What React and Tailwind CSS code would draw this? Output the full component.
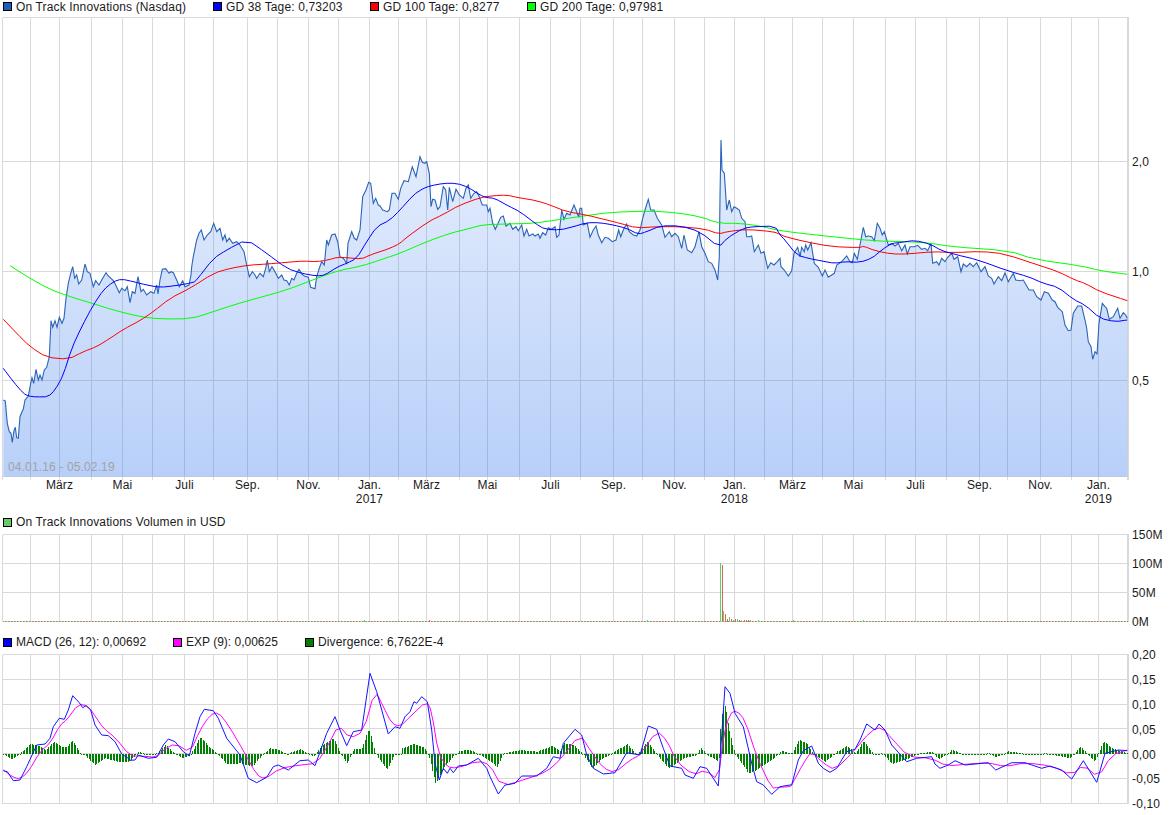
import React from 'react';

// traced from the chart, each piece is [offsetX, offsetY, "x,y x,y ..."] at 3x scale
const trace = (pieces) => {
  const out = [];
  pieces.forEach(([ox, oy, str]) => {
    str.trim().split(/\s+/).forEach((p) => {
      const [x, y] = p.split(',').map(Number);
      const rx = ox + x / 3;
      if (!out.length || rx > out[out.length - 1][0]) out.push([rx, oy + y / 3]);
    });
  });
  return out;
};

const toLine = (pts) => pts.map(([x, y]) => `${x.toFixed(1)},${y.toFixed(1)}`).join(' ');

// corner cutting, the averages are smooth curves and not polygons
const smooth = (pts, rounds = 2) => {
  let cur = pts;
  for (let r = 0; r < rounds; r++) {
    const next = [cur[0]];
    for (let i = 0; i < cur.length - 1; i++) {
      const [x0, y0] = cur[i];
      const [x1, y1] = cur[i + 1];
      next.push([x0 * 0.75 + x1 * 0.25, y0 * 0.75 + y1 * 0.25]);
      next.push([x0 * 0.25 + x1 * 0.75, y0 * 0.25 + y1 * 0.75]);
    }
    next.push(cur[cur.length - 1]);
    cur = next;
  }
  return cur;
};

const price = trace([
  [0, 260, '10,420 16,423 22,490 28,515 33,520 37,547 42,512 46,502 50,533 55,535 60,470 66,455 70,447 75,420 85,408 92,370 96,353 101,370 108,328 115,360 120,345 126,360 133,330 140,322 148,290 153,182 158,202 165,182 171,202 178,172 186,190 192,175 198,115 205,70 212,40 218,20 224,55 230,45 236,72 245,60 255,12 262,35 270,40 280,80 287,62 297,75 305,60 318,38 325,48 333,55 340,62 347,75 358,98 365,85 375,92 382,80 390,128 397,95 405,100 414,50 423,95 430,88 440,105 452,95 462,100 470,75 474,102 480,60 487,28 497,26 507,40 513,35 520,38 530,60 538,80 548,62 555,80 567,75 573,45'],
  [0, 0, '575,800 580,770 590,720 597,700 604,690 612,720 622,705 632,695 641,670 650,695 660,685 668,720 675,705 680,725 688,715 698,730 710,725 720,735 732,755 740,795 748,830 757,815 765,825 770,835 780,820 790,830 797,805 802,780 808,815 816,800 825,815 835,835 845,825 852,840'],
  [0, 260, '860,62 868,75 875,55 882,60 890,40 897,28 905,42 913,48 925,52 932,82 945,86 950,50 958,25 965,5'],
  [0, 0, '973,795 980,720 985,735 995,705 1005,702 1013,725 1020,770 1030,775 1040,790 1044,730 1055,695 1063,715 1070,720 1080,690 1088,590 1098,570 1106,547 1112,550 1120,610 1127,595 1135,615'],
  [380, 130, '0,228 8,240 22,245 28,240 36,190 45,190 55,208 62,175 72,152 85,155 97,110 108,140 120,80 127,97 134,100 140,95 148,130 153,230 158,208 165,210 173,238 180,230 190,170 197,180 203,240 208,172 218,215 228,178 238,195 250,205 258,175 265,165 272,205 282,190 290,185 298,200 307,225 320,225 325,245 330,235 338,280 346,298 352,285 362,262 370,258 378,288 390,280 398,298 408,290 415,302 425,285 432,318 440,298 447,318 458,312 465,318 475,312 480,325 488,308 497,315 505,293 515,298 525,290 530,322 537,315 545,240 552,268 560,250 570,255 582,225 590,245 596,262 600,235 605,235 610,285 622,280 630,322 640,300 648,288 655,315 665,338 675,322 685,325 697,335 708,330 716,300 722,320 732,295 740,282 748,305 760,315 770,318 780,300 788,265 795,240 805,208 812,240 822,240 832,265 845,285 855,322 868,305 875,320 885,310 895,320 905,355 912,315 922,360 935,368 945,350 957,305 965,350 975,370 985,395 995,400 1005,420 1013,450 1018,380 1020,200 1023,30 1026,120 1033,130 1040,240 1048,210 1055,245 1062,230 1070,235 1078,240 1085,265 1095,275 1100,320 1108,320 1115,318 1123,365 1135,345 1143,370 1152,365 1163,415 1172,398 1182,405 1192,395 1200,385'],
  [775, 130, '18,410 28,420 40,438 50,422 57,370 68,352 75,380 80,352 88,365 92,345 98,360 108,338 118,400 130,412 142,438 150,420 160,442 178,430 185,405 200,395 215,378 225,395 232,398 238,370 247,388 255,345 265,292 272,320 280,318 290,320 298,332 307,280 315,295 322,315 328,305 340,345 350,340 360,348 370,340 380,362 390,345 397,372 405,350 418,350 428,346 440,358 450,355 458,362 468,340 473,400 485,395 492,405 500,385 510,395 518,382 530,370 537,388 548,380 558,425 565,402 575,410 585,400 595,410 605,398 618,425 630,410 640,438 650,445 657,462 670,440 680,452 690,428 700,455 715,430 722,450 735,452 745,450 762,480 775,480 785,500 798,510 808,485 820,490 832,510 840,515 848,532 862,545 870,585 880,602 888,600 895,550 908,528 920,528 930,570 935,595 940,635 948,650 953,688 960,665 966,672 972,580 982,520 990,530 995,535 1003,568 1015,560 1028,535 1035,565 1045,548 1052,555 1057,565'],
]);

const gd38 = smooth(trace([
  [0, 260, '10,325 40,365 70,400 85,408 110,411 145,410 165,390 190,345 215,265 245,200 280,135 310,90 340,65 365,57 400,65 440,75 480,82 520,78 580,68'],
  [0, 0, '590,840 640,775 680,750 740,718 800,760 860,805 905,820 950,828 975,825 1010,802 1040,790 1070,775 1100,725 1130,680 1170,660 1200,630'],
  [380, 130, '100,195 130,175 150,168 190,160 230,160 265,172 300,195 320,203 345,205 385,228 420,245 465,280 495,298 540,300 580,290 620,278 660,278 700,285 740,295 775,313 800,305 840,288 900,287 960,305 1017,352 1040,325 1090,295 1120,290 1185,288 1200,315'],
  [775, 130, '30,330 65,375 100,385 140,393 180,400 210,395 255,397 290,385 320,360 350,340 380,337 420,331 465,342 500,362 540,373 610,390 700,423 760,440 805,460 850,472 895,508 930,525 975,565 1020,575 1057,570'],
]), 1);

const gd100 = smooth(trace([
  [0, 260, '10,178 50,220 90,260 140,292 205,298 250,275 290,260 330,235 370,208 420,182 460,155 510,115 570,85 640,40 690,25 750,15 800,12 860,7 910,3 950,5 985,0'],
  [0, 0, '1010,772 1040,773 1085,777 1110,765 1170,745 1200,730'],
  [380, 130, '80,322 145,275 190,253 240,225 300,203 340,197 380,195 415,203 470,212 510,225 560,245 620,255 680,270 720,280 770,294 830,290 900,290 975,297 1017,312 1040,305 1100,298 1180,305 1200,313'],
  [775, 130, '30,320 90,335 170,350 255,353 265,348 300,362 350,372 400,372 470,365 540,368 620,364 690,372 790,405 850,425 900,450 930,460 975,485 1057,512'],
]), 1);

const gd200 = smooth(trace([
  [0, 260, '30,17 90,55 150,88 210,110 270,128 340,150 420,170 480,177 575,176 640,155 700,135 770,115 860,90 950,55 1015,32 1085,18 1140,0'],
  [380, 130, '60,370 140,335 210,310 270,295 310,284 380,282 460,280 530,270 610,258 690,247 810,243 890,248 960,260 1017,280 1080,280 1140,288 1200,302'],
  [775, 130, '80,310 170,320 300,333 400,335 470,340 530,350 700,362 780,388 920,408 975,422 1057,433'],
]), 1);

const macd = trace([
  [0, 630, '10,422 22,425 40,452 60,450 80,410 110,345 135,342 150,325 160,290 178,265 193,268 205,240 218,197 238,218 248,233 258,227 272,240 285,285 305,315 325,317 345,335 365,372 385,385 390,391 405,390 415,375 445,385 470,382 490,345 505,327 525,335 550,365 568,378 585,310 600,260 613,238 640,242 655,265 680,325 720,375 745,445 770,458 800,442 820,410 835,405 865,420 900,392 925,390 945,407 980,310 1005,260 1020,300 1040,347 1060,305 1085,300 1110,130 1130,185 1165,312 1185,290 1200,295'],
  [390, 640, '10,260 30,263 45,230 60,215 72,185 80,190 95,170 112,185 125,270 135,370 148,420 160,385 172,400 180,385 190,398 205,378 230,375 265,355 290,385 300,410 325,462 345,435 375,430 395,408 440,408 470,385 490,350 510,355 520,310 555,268 575,285 590,345 610,385 640,402 675,398 710,338 750,345 775,258 800,268 820,325 840,378 875,385 885,405 910,415 930,380 950,385 985,438 1005,140 1020,160 1035,220 1060,260 1085,370 1100,425 1120,435 1145,463 1170,440 1200,435'],
  [775, 640, '15,437 50,435 70,360 85,332 110,318 130,370 145,385 165,397 185,385 215,335 240,328 255,300 275,252 300,270 312,252 330,270 350,315 395,365 425,355 470,350 480,372 495,385 520,375 540,362 570,375 640,368 662,390 710,368 750,368 800,385 825,378 860,390 890,417 925,362 965,427 990,340 1030,330 1057,332'],
]);

const exp9 = smooth(trace([
  [0, 630, '10,420 40,442 60,447 85,425 120,365 150,340 180,285 200,270 235,222 265,228 290,265 310,295 345,322 390,378 420,378 470,382 490,360 525,340 570,368 600,300 630,255 655,247 685,285 735,370 770,435 795,447 840,415 900,405 950,400 985,345 1015,285 1050,325 1090,305 1125,180 1150,230 1175,280 1200,290'],
  [390, 640, '25,262 60,230 110,183 125,215 145,340 170,380 200,385 265,362 300,375 335,440 415,415 470,395 510,360 570,282 600,330 640,385 675,398 720,360 750,345 800,272 830,300 860,365 910,405 945,390 985,420 1000,290 1020,220 1040,212 1065,240 1100,350 1145,445 1165,442 1200,440'],
  [775, 640, '50,435 85,370 110,333 145,370 180,390 230,340 290,270 320,262 350,295 400,350 470,355 515,378 580,372 640,368 690,380 750,368 830,378 890,405 925,375 970,412 1010,345 1057,330'],
]), 1);

const divKeys = trace([
  [0, 630, '10,373 35,388 60,370 90,342 120,350 135,360 160,336 185,350 200,352 215,330 240,370 255,378 285,405 315,385 350,395 385,395 400,380 415,365 440,375 470,370 495,345 520,368 545,385 570,375 600,320 625,350 650,370 680,403 720,400 755,410 790,370 810,355 830,358 860,372 900,358 940,380 965,345 1000,325 1020,370 1040,400 1060,358 1085,355 1105,295 1125,370 1160,420 1185,370 1200,378'],
  [390, 640, '35,325 70,312 100,322 115,345 135,430 160,385 185,352 210,332 240,330 270,345 320,380 340,340 390,330 440,335 485,318 510,335 520,310 550,315 580,345 605,385 630,360 665,340 710,312 740,345 770,305 800,345 835,385 880,355 920,345 930,322 950,345 985,365 992,228 1005,195 1015,265 1025,310 1035,345 1075,400 1100,390 1150,355 1175,332 1200,340'],
  [775, 640, '50,340 70,300 95,310 115,345 150,365 185,335 215,318 240,340 265,303 295,342 320,340 350,372 400,355 430,340 470,336 490,358 530,330 570,345 640,340 660,352 700,334 770,345 810,340 885,355 915,320 958,365 985,303 1010,325 1057,340'],
]);

const valueAt = (keys, x) => {
  if (x <= keys[0][0]) return keys[0][1];
  for (let i = 1; i < keys.length; i++) {
    if (x <= keys[i][0]) {
      const [x0, y0] = keys[i - 1];
      const [x1, y1] = keys[i];
      return y0 + ((y1 - y0) * (x - x0)) / (x1 - x0);
    }
  }
  return keys[keys.length - 1][1];
};

const gridX = [2.5, 30.5, 59.5, 91.5, 122.5, 152.5, 184.5, 213.5, 247.5, 277.5, 308.5, 338.5, 369.5, 398.5, 426.5, 459.5, 487.5, 519.5, 550.5, 580.5, 613.5, 642.5, 674.5, 704.5, 734.5, 764.5, 792.5, 822.5, 853.5, 885.5, 915.5, 946.5, 979.5, 1007.5, 1040.5, 1071.5, 1098.5, 1127.5, 1128.5];

const months = [
  ['März', 59.5], ['Mai', 122.5], ['Juli', 184.5], ['Sep.', 247.5], ['Nov.', 308.5], ['Jan.', 369.5, '2017'],
  ['März', 426.5], ['Mai', 487.5], ['Juli', 550.5], ['Sep.', 613.5], ['Nov.', 674.5], ['Jan.', 734.5, '2018'],
  ['März', 792.5], ['Mai', 853.5], ['Juli', 915.5], ['Sep.', 979.5], ['Nov.', 1040.5], ['Jan.', 1098.5, '2019'],
];

const volumeSpikes = [
  [720, 563, '#5fd35f'], [722, 565, '#e06060'], [723, 611, '#5fd35f'], [725, 614, '#e06060'], [727, 619, '#e06060'],
  [729, 617, '#5fd35f'], [731, 619, '#e06060'], [733, 620, '#5fd35f'], [735, 619, '#e06060'], [737, 619, '#5fd35f'],
  [739, 620, '#e06060'], [741, 620, '#5fd35f'], [744, 620, '#e06060'], [746, 620, '#e06060'], [748, 620, '#e06060'],
  [750, 620, '#5fd35f'], [758, 620, '#5fd35f'], [793, 620, '#5fd35f'], [863, 620, '#5fd35f'], [364, 620, '#5fd35f'],
  [429, 620, '#e06060'], [647, 620, '#5fd35f'],
];

const baseTicks = [];
for (let x = 3; x < 1128; x += 1.5) baseTicks.push(x);

const Grid = ({ lines }) => (
  <g stroke="#d9d9d9" strokeWidth="1" shapeRendering="crispEdges">
    {gridX.map((x) => (
      <line key={x} x1={x} x2={x} y1={lines[0]} y2={lines[lines.length - 1]} />
    ))}
    {lines.map((y) => (
      <line key={y} x1="2.5" x2="1128.5" y1={y} y2={y} />
    ))}
  </g>
);

const Legend = ({ items, className }) => (
  <div className={`flex items-center pl-[3px] text-[12px] leading-[14px] text-[#1a1a1a] ${className}`}>
    {items.map((item) => (
      <div key={item.label} className={`flex items-center gap-1 ${item.gap}`}>
        <span className={`block h-[9px] w-[9px] border border-black ${item.color}`}></span>
        <span>{item.label}</span>
      </div>
    ))}
  </div>
);

const AxisLabel = ({ y, children }) => (
  <text x="1132" y={y + 4} fontSize="12" fill="#1a1a1a">{children}</text>
);

export default function App() {
  const first = price[0];
  const last = price[price.length - 1];
  const area = `M${first[0]},476.5 L${toLine(price).replace(/ /g, ' L')} L${last[0]},476.5 Z`;

  return (
    <div className="flex h-[815px] w-[1175px] flex-col overflow-hidden bg-white font-['Liberation_Sans',Arial,sans-serif] tracking-[0.14px]">
      <Legend
        className="h-[13px]"
        items={[
          { label: 'On Track Innovations (Nasdaq)', color: 'bg-[#1c5fb8]', gap: 'w-[210px]' },
          { label: 'GD 38 Tage: 0,73203', color: 'bg-[#0000ff]', gap: 'w-[157px]' },
          { label: 'GD 100 Tage: 0,8277', color: 'bg-[#ff0000]', gap: 'w-[157px]' },
          { label: 'GD 200 Tage: 0,97981', color: 'bg-[#00ff00]', gap: '' },
        ]}
      />

      <svg className="block h-[502px] w-[1175px]" viewBox="0 13 1175 502">
        <defs>
          <linearGradient id="areaFill" gradientUnits="userSpaceOnUse" x1="0" x2="0" y1="17" y2="476">
            <stop offset="0" stopColor="#3377ee" stopOpacity="0.05" />
            <stop offset="1" stopColor="#3377ee" stopOpacity="0.35" />
          </linearGradient>
        </defs>
        <Grid lines={[17.5, 161.5, 271.5, 380.5, 476.5]} />
        <g stroke="#d9d9d9" shapeRendering="crispEdges">
          {gridX.map((x) => <line key={x} x1={x} x2={x} y1="476.5" y2="480" />)}
        </g>
        <path d={area} fill="url(#areaFill)" />
        <polyline points={toLine(price)} fill="none" stroke="#2a64b8" strokeWidth="1.1" />
        <polyline points={toLine(gd200)} fill="none" stroke="#00ff00" strokeWidth="1" />
        <polyline points={toLine(gd100)} fill="none" stroke="#ff0000" strokeWidth="1" />
        <polyline points={toLine(gd38)} fill="none" stroke="#0000ff" strokeWidth="1" />
        <text x="8" y="471" fontSize="12" fill="#a3a3a3">04.01.16 - 05.02.19</text>
        <AxisLabel y={162}>2,0</AxisLabel>
        <AxisLabel y={272}>1,0</AxisLabel>
        <AxisLabel y={381}>0,5</AxisLabel>
        {months.map(([name, x, year]) => (
          <g key={x} fontSize="12" fill="#1a1a1a" textAnchor="middle">
            <text x={x} y="489">{name}</text>
            {year && <text x={x} y="503">{year}</text>}
          </g>
        ))}
      </svg>

      <Legend
        className="h-[14px]"
        items={[{ label: 'On Track Innovations Volumen in USD', color: 'bg-[#66cc66]', gap: '' }]}
      />

      <svg className="block h-[106px] w-[1175px]" viewBox="0 529 1175 106">
        <Grid lines={[534.5, 563.5, 592.5, 621.5]} />
        <g shapeRendering="crispEdges">
          {baseTicks.map((x, i) => (
            <rect key={x} x={Math.round(x)} y="621" width="1" height="1" fill={i % 2 ? '#e06060' : '#5fd35f'} />
          ))}
          {volumeSpikes.map(([x, y, color]) => (
            <rect key={x} x={x} y={y} width="1" height={622 - y} fill={color} />
          ))}
        </g>
        <AxisLabel y={535}>150M</AxisLabel>
        <AxisLabel y={564}>100M</AxisLabel>
        <AxisLabel y={593}>50M</AxisLabel>
        <AxisLabel y={622}>0M</AxisLabel>
      </svg>

      <Legend
        className="h-[14px]"
        items={[
          { label: 'MACD (26, 12): 0,00692', color: 'bg-[#0000ff]', gap: 'w-[170px] tracking-normal' },
          { label: 'EXP (9): 0,00625', color: 'bg-[#ff00ff]', gap: 'w-[131px] tracking-normal' },
          { label: 'Divergence: 6,7622E-4', color: 'bg-[#008000]', gap: 'ml-px' },
        ]}
      />

      <svg className="block h-[166px] w-[1175px]" viewBox="0 649 1175 166">
        <Grid lines={[654.5, 679.5, 704.5, 728.5, 753.5, 778.5, 803.5]} />
        <g fill="#008000" shapeRendering="crispEdges">
          {baseTicks.map((x) => {
            const top = valueAt(divKeys, x);
            const h = Math.abs(top - 753.5);
            return <rect key={x} x={Math.round(x)} y={Math.min(top, 753.5)} width="1" height={Math.max(h, 1)} />;
          })}
        </g>
        <polyline points={toLine(exp9)} fill="none" stroke="#ff00ff" strokeWidth="1" />
        <polyline points={toLine(macd)} fill="none" stroke="#1414ff" strokeWidth="1" />
        <AxisLabel y={655}>0,20</AxisLabel>
        <AxisLabel y={680}>0,15</AxisLabel>
        <AxisLabel y={705}>0,10</AxisLabel>
        <AxisLabel y={730}>0,05</AxisLabel>
        <AxisLabel y={755}>0,00</AxisLabel>
        <AxisLabel y={779}>-0,05</AxisLabel>
        <AxisLabel y={804}>-0,10</AxisLabel>
      </svg>
    </div>
  );
}
